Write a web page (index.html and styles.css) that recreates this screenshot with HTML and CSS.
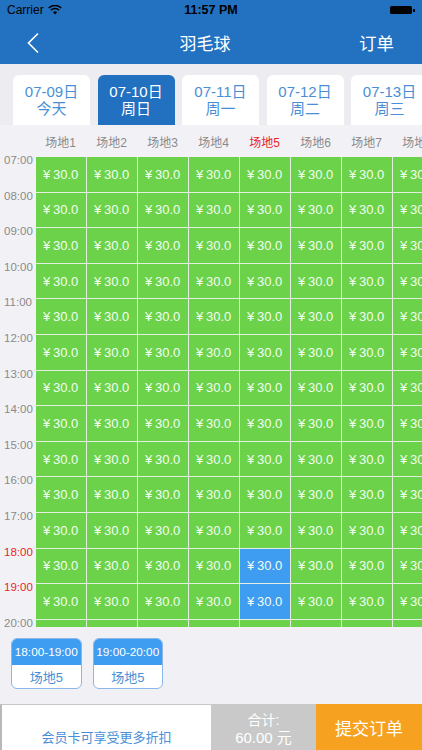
FILE: index.html
```html
<!DOCTYPE html>
<html lang="zh">
<head>
<meta charset="utf-8">
<title>羽毛球</title>
<link rel="stylesheet" href="styles.css">
</head>
<body>
<div class="app">
  <header class="top">
    <div class="status">
      <div class="status-left">Carrier
        <svg class="wifi" width="14" height="10" viewBox="0 0 14 10"><path d="M7 9.6 L4.9 7.3 A3 3 0 0 1 9.1 7.3 Z" fill="#000"/><path d="M2.9 5.2 A5.8 5.8 0 0 1 11.1 5.2" stroke="#000" stroke-width="1.6" fill="none"/><path d="M0.8 3 A8.8 8.8 0 0 1 13.2 3" stroke="#000" stroke-width="1.6" fill="none"/></svg>
      </div>
      <div class="status-time">11:57 PM</div>
      <div class="status-right"><span class="battery"></span><span class="nub"></span></div>
    </div>
    <nav class="nav">
      <svg class="back" width="14" height="22" viewBox="0 0 14 22"><polyline points="11,1.5 1.5,11 11,20.5" fill="none" stroke="#fff" stroke-width="1.6"/></svg>
      <div class="title">羽毛球</div>
      <div class="orders">订单</div>
    </nav>
  </header>

  <div class="tabs">
    <div class="tab"><span>07-09日</span><span>今天</span></div>
    <div class="tab active"><span>07-10日</span><span>周日</span></div>
    <div class="tab"><span>07-11日</span><span>周一</span></div>
    <div class="tab"><span>07-12日</span><span>周二</span></div>
    <div class="tab"><span>07-13日</span><span>周三</span></div>
  </div>

  <div class="schedule">
    <div class="heads">
      <div class="corner"></div>
      <div class="head">场地1</div>
      <div class="head">场地2</div>
      <div class="head">场地3</div>
      <div class="head">场地4</div>
      <div class="head red">场地5</div>
      <div class="head">场地6</div>
      <div class="head">场地7</div>
      <div class="head">场地8</div>
    </div>
    <div class="board">
      <div class="times" id="times"></div>
      <div class="cells" id="cells"></div>
    </div>
  </div>

  <div class="chips">
    <div class="chip"><div class="chip-top">18:00-19:00</div><div class="chip-bot">场地5</div></div>
    <div class="chip"><div class="chip-top">19:00-20:00</div><div class="chip-bot">场地5</div></div>
  </div>

  <footer class="bar">
    <div class="promo">会员卡可享受更多折扣</div>
    <div class="total"><span>合计:</span><span>60.00 元</span></div>
    <div class="submit">提交订单</div>
  </footer>
</div>
<script src="app.js"></script>
</body>
</html>
```
FILE: app.js
```js
(function () {
  var times = document.getElementById('times');
  var cells = document.getElementById('cells');
  for (var h = 7; h <= 20; h++) {
    var t = document.createElement('div');
    t.className = 'time' + (h === 18 || h === 19 ? ' red' : '');
    t.textContent = (h < 10 ? '0' : '') + h + ':00';
    times.appendChild(t);
  }
  for (var r = 0; r < 14; r++) {
    for (var c = 0; c < 8; c++) {
      var d = document.createElement('div');
      var sel = c === 4 && (r === 11 || r === 12);
      d.className = 'cell' + (sel ? ' sel' : '');
      d.textContent = '\u00A5\u200930.0';
      cells.appendChild(d);
    }
  }
})();
```
FILE: styles.css
```css
* { box-sizing: border-box; }
html, body { margin: 0; padding: 0; }
body {
  width: 422px;
  height: 750px;
  overflow: hidden;
  background: #f1f1f5;
  font-family: "Liberation Sans", "Noto Sans CJK SC", sans-serif;
}
.app { width: 422px; height: 750px; display: flex; flex-direction: column; overflow: hidden; }

.top { background: #2371c1; color: #fff; }
.status {
  height: 20px;
  display: flex;
  align-items: center;
  justify-content: space-between;
  padding: 0 7px;
  color: #000;
  font-size: 12px;
}
.status-left { display: flex; align-items: center; gap: 4px; width: 90px; }
.wifi { margin-top: -1px; }
.status-time { font-weight: bold; font-size: 12.5px; }
.status-right { width: 90px; display: flex; justify-content: flex-end; align-items: center; }
.battery { width: 22px; height: 8px; background: #000; border-radius: 1.5px; }
.nub { width: 2px; height: 3px; background: #000; margin-left: 1px; }

.nav {
  height: 44px;
  display: flex;
  align-items: center;
  justify-content: space-between;
  padding: 0 28px 0 27px;
}
.back { width: 14px; height: 22px; margin-top: 1px; }
.title { font-size: 17px; padding-left: 10px; }
.orders { font-size: 17.5px; }

.tabs {
  height: 61px;
  background: #ececf1;
  display: flex;
  align-items: flex-end;
  gap: 7.5px;
  padding-left: 13px;
  overflow: hidden;
}
.tab {
  flex: 0 0 77px;
  height: 50px;
  background: #fff;
  border-radius: 6px 6px 0 0;
  display: flex;
  flex-direction: column;
  align-items: center;
  justify-content: center;
  color: #4a8fd6;
  font-size: 15px;
  line-height: 17px;
}
.tab.active { background: #2270c0; color: #fff; }

.schedule { background: #f2f2f6; }
.heads { height: 32px; display: flex; overflow: hidden; gap: 1px; }
.corner { flex: 0 0 34.7px; }
.head {
  flex: 0 0 50px;
  text-align: center;
  font-size: 12px;
  line-height: 20px;
  padding-top: 8px;
  color: #8a8a8a;
}
.head.red { color: #e8262a; }

.board { height: 470px; display: flex; gap: 1px; }
.times { flex: 0 0 34.7px; display: flex; flex-direction: column; gap: 1px; }
.time {
  height: 34.6px;
  flex: 0 0 34.6px;
  font-size: 11.5px;
  line-height: 14px;
  margin-top: -4px;
  margin-bottom: 4px;
  padding-left: 4px;
  color: #8a8a8a;
}
.time.red { color: #e8262a; }
.cells {
  height: 470px;
  overflow: hidden;
  display: grid;
  grid-template-columns: repeat(8, 50px);
  grid-auto-rows: 34.6px;
  gap: 1px;
  background: #e3eee1;
  align-content: start;
}
.cell {
  background: #6bd24a;
  color: #f2fff0;
  font-size: 13px;
  display: flex;
  align-items: center;
  justify-content: center;
}
.cell.sel { background: #3e9cf1; }

.chips { display: flex; gap: 11px; padding: 10.5px 0 0 11px; height: 77px; }
.chip {
  width: 70.5px;
  height: 51px;
  border: 1px solid #88b8ea;
  border-radius: 6px;
  overflow: hidden;
  background: #fff;
}
.chip-top {
  height: 26px;
  background: #3e9cf1;
  color: #fff;
  font-size: 11.8px;
  display: flex;
  align-items: center;
  justify-content: center;
}
.chip-bot {
  height: 24px;
  color: #4a8fd6;
  font-size: 13px;
  display: flex;
  align-items: center;
  justify-content: center;
}

.bar {
  height: 46px;
  display: flex;
  flex: 0 0 46px;
}
.promo {
  flex: 0 0 211px;
  background: #fff;
  border-top: 1px solid #c8c8cc;
  border-left: 2px solid #b8b8bc;
  color: #4a8fd6;
  font-size: 13px;
  display: flex;
  align-items: center;
  justify-content: center;
  padding-top: 18px;
}
.total {
  flex: 0 0 105px;
  background: #c9c9c9;
  color: #fff;
  display: flex;
  flex-direction: column;
  align-items: center;
  justify-content: center;
  font-size: 14px;
  line-height: 17px;
  padding-top: 3px;
}
.total span:last-child { font-size: 15px; }
.submit {
  flex: 1;
  background: #f6a11f;
  color: #fff;
  font-size: 17px;
  display: flex;
  align-items: center;
  justify-content: center;
}
```
